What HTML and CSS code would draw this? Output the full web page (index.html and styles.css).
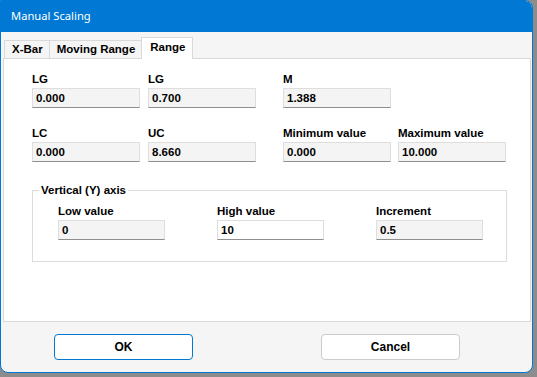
FILE: index.html
```html
<!DOCTYPE html>
<html lang="en">
  <head>
    <meta charset="UTF-8" />
    <meta name="viewport" content="width=device-width, initial-scale=1.0" />
    <title>Manual Scaling</title>
    <link rel="stylesheet" href="styles.css">
  </head>
  <body>
    <div class="window">
      <div class="titlebar">Manual Scaling</div>

      <div class="tabs">
        <div class="tab">X-Bar</div>
        <div class="tab">Moving Range</div>
        <div class="tab active">Range</div>
      </div>

      <div class="panel">
        <div class="grid">
          <div class="field">
            <div class="label">LG</div>
            <div class="box">0.000</div>
          </div>
          <div class="field">
            <div class="label">LG</div>
            <div class="box">0.700</div>
          </div>
          <div class="field">
            <div class="label">M</div>
            <div class="box">1.388</div>
          </div>
          <div></div>

          <div class="field">
            <div class="label">LC</div>
            <div class="box">0.000</div>
          </div>
          <div class="field">
            <div class="label">UC</div>
            <div class="box">8.660</div>
          </div>
          <div class="field">
            <div class="label">Minimum value</div>
            <div class="box">0.000</div>
          </div>
          <div class="field">
            <div class="label">Maximum value</div>
            <div class="box">10.000</div>
          </div>
        </div>

        <fieldset class="group">
          <legend>Vertical (Y) axis</legend>
          <div class="group-row">
            <div class="field">
              <div class="label">Low value</div>
              <div class="box">0</div>
            </div>
            <div class="field">
              <div class="label">High value</div>
              <div class="box editable">10</div>
            </div>
            <div class="field">
              <div class="label">Increment</div>
              <div class="box">0.5</div>
            </div>
          </div>
        </fieldset>
      </div>

      <div class="footer">
        <button class="btn default">OK</button>
        <button class="btn">Cancel</button>
      </div>
    </div>
  </body>
</html>
```

FILE: styles.css
```css
body {
  margin: 0;
  background-color: #8c8c8c;
  font-family: "Liberation Sans", Arial, sans-serif;
  color: #000;
}

.window {
  width: 533px;
  height: 373px;
  box-sizing: border-box;
  border: 1px solid #0078d4;
  border-radius: 0 8px 8px 8px;
  background-color: #f5f5f5;
  display: flex;
  flex-direction: column;
  overflow: hidden;
}

.titlebar {
  height: 31px;
  flex-shrink: 0;
  background-color: #0078d4;
  color: #fff;
  font-family: "Noto Sans", sans-serif;
  font-size: 11.2px;
  line-height: 30px;
  padding-left: 10px;
}

.tabs {
  height: 26px;
  flex-shrink: 0;
  display: flex;
  align-items: flex-end;
  padding-left: 3px;
}

.tab {
  height: 18px;
  box-sizing: border-box;
  border: 1px solid #d9d9d9;
  border-bottom: none;
  margin-right: -1px;
  padding: 0 6px 0 7px;
  font-size: 11.5px;
  font-weight: bold;
  line-height: 17px;
}

.tab.active {
  position: relative;
  z-index: 1;
  height: 22px;
  margin-bottom: -1px;
  padding: 0 7px 0 8px;
  background-color: #fff;
  line-height: 19px;
}

.panel {
  height: 264px;
  box-sizing: border-box;
  flex-shrink: 0;
  margin: 0 1px 0 2px;
  border: 1px solid #d9d9d9;
  background-color: #fff;
  padding: 13px 0 0 28px;
}

.grid {
  display: grid;
  grid-template-columns: 116px 135px 115px 108px;
  row-gap: 18px;
}

.label {
  font-size: 11.5px;
  font-weight: bold;
  line-height: 14px;
  margin-bottom: 2px;
  white-space: nowrap;
}

.box {
  width: 108px;
  height: 20px;
  box-sizing: border-box;
  border: 1px solid #dedede;
  border-bottom-color: #8f8f8f;
  background-color: #f4f4f4;
  padding-left: 3px;
  font-size: 11.5px;
  font-weight: bold;
  line-height: 18px;
}

.box.editable {
  background-color: #fff;
}

.group {
  width: 475px;
  box-sizing: border-box;
  margin: 21px 0 0 0;
  border: 1px solid #dcdcdc;
  padding: 7px 0 21px 6px;
}

.group legend {
  padding: 0 2px;
  font-size: 11.5px;
  font-weight: bold;
  line-height: 14px;
}

.group-row {
  display: grid;
  grid-template-columns: 159px 159px 107px;
  padding-left: 19px;
}

.group-row .box {
  width: 107px;
}

.footer {
  display: flex;
  gap: 128px;
  padding: 12px 0 0 53px;
}

.btn {
  width: 139px;
  height: 26px;
  border: 1px solid #cccccc;
  border-radius: 4px;
  background-color: #fff;
  font-family: "Liberation Sans", Arial, sans-serif;
  font-size: 12px;
  font-weight: bold;
  color: #000;
  padding: 0;
}

.btn.default {
  border-color: #0078d4;
}
```
